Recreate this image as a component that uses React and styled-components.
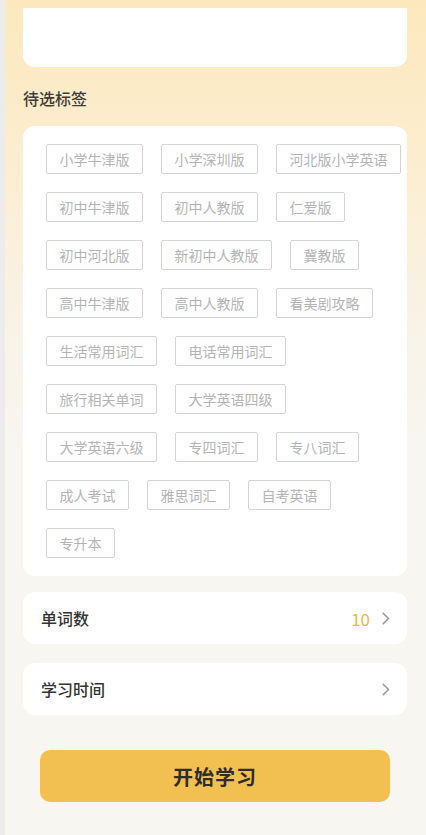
import React from 'react';
import styled, { createGlobalStyle } from 'styled-components';

const GlobalStyle = createGlobalStyle`
  html, body {
    margin: 0;
    padding: 0;
    background: #f7f6f1;
    font-family: "Noto Sans CJK SC", "Noto Sans", sans-serif;
  }
`;

const Screen = styled.div`
  display: flex;
  width: 426px;
  height: 835px;
  overflow: hidden;
`;

const SideStrip = styled.div`
  width: 5px;
  flex-shrink: 0;
  background: #ececec;
`;

const Main = styled.div`
  flex: 1;
  display: flex;
  flex-direction: column;
  padding: 8px 19px 0 18px;
  background: linear-gradient(180deg, #fde8bd 0%, #fbeed3 22%, #f8f3e8 40%, #f7f6f1 55%, #f7f6f1 100%);
`;

const TopCard = styled.div`
  height: 59px;
  background: #fff;
  border-radius: 0 0 12px 12px;
`;

const SectionTitle = styled.div`
  padding: 20px 0 17px;
  line-height: 22px;
  font-size: 16px;
  color: #3f3d3b;
  font-weight: 500;
`;

const TagCard = styled.div`
  background: #fff;
  border-radius: 12px;
  padding: 18px 4px 18px 23px;
  display: flex;
  flex-wrap: wrap;
  gap: 18px;
`;

const Tag = styled.div`
  height: 30px;
  box-sizing: border-box;
  padding: 0 12.5px;
  border: 1px solid #d4d4d4;
  border-radius: 2px;
  display: flex;
  align-items: center;
  font-size: 14px;
  color: #b4b4b4;
  white-space: nowrap;
`;

const OptionRow = styled.div`
  height: 52px;
  margin-top: ${(p) => p.$gap}px;
  background: #fff;
  border-radius: 12px;
  display: flex;
  align-items: center;
  padding: 0 17px 0 18px;
`;

const OptionLabel = styled.div`
  flex: 1;
  font-size: 16px;
  color: #333;
  font-weight: 500;
`;

const OptionValue = styled.div`
  font-size: 17px;
  color: #f4b73f;
  margin-right: 12px;
`;

const StartButton = styled.button`
  margin: 35px 17px 0;
  height: 52px;
  border: none;
  border-radius: 10px;
  background: #f2c051;
  color: #2f2d2a;
  font-family: inherit;
  font-size: 20px;
  font-weight: 700;
  letter-spacing: 1px;
`;

const Chevron = () => (
  <svg width="8" height="13" viewBox="0 0 8 13">
    <path d="M1.2 1.2 L6.5 6.5 L1.2 11.8" fill="none" stroke="#9a9a9a" strokeWidth="1.6" strokeLinecap="round" strokeLinejoin="round" />
  </svg>
);

const tags = [
  '小学牛津版', '小学深圳版', '河北版小学英语',
  '初中牛津版', '初中人教版', '仁爱版',
  '初中河北版', '新初中人教版', '冀教版',
  '高中牛津版', '高中人教版', '看美剧攻略',
  '生活常用词汇', '电话常用词汇',
  '旅行相关单词', '大学英语四级',
  '大学英语六级', '专四词汇', '专八词汇',
  '成人考试', '雅思词汇', '自考英语',
  '专升本',
];

export default function App() {
  return (
    <Screen>
      <GlobalStyle />
      <SideStrip />
      <Main>
        <TopCard />
        <SectionTitle>待选标签</SectionTitle>
        <TagCard>
          {tags.map((t) => (
            <Tag key={t}>{t}</Tag>
          ))}
        </TagCard>
        <OptionRow $gap={16}>
          <OptionLabel>单词数</OptionLabel>
          <OptionValue>10</OptionValue>
          <Chevron />
        </OptionRow>
        <OptionRow $gap={19}>
          <OptionLabel>学习时间</OptionLabel>
          <Chevron />
        </OptionRow>
        <StartButton>开始学习</StartButton>
      </Main>
    </Screen>
  );
}
